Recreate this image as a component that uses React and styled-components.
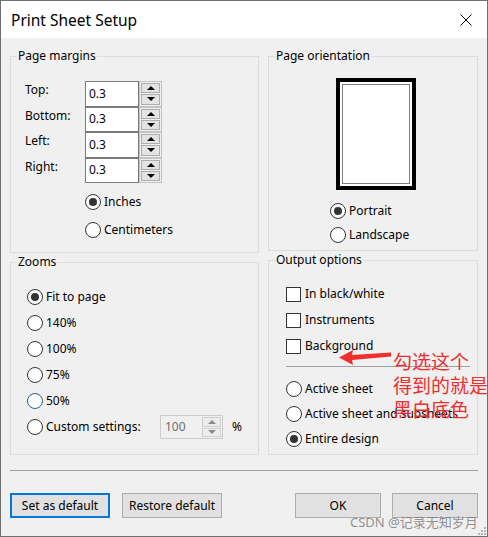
import React from "react";
import styled, { createGlobalStyle } from "styled-components";

const GlobalStyle = createGlobalStyle`
  html, body { margin: 0; padding: 0; background: #fff; }
  body {
    font-family: "Noto Sans", "Noto Sans CJK SC", sans-serif;
    font-size: 12px;
    color: #000;
  }
  * { box-sizing: border-box; }
`;

const Window = styled.div`
  position: relative;
  width: 488px;
  height: 537px;
  border: 1px solid #6f6f6f;
  background: #f0f0f0;
  display: flex;
  flex-direction: column;
  overflow: hidden;
`;

const TitleBar = styled.div`
  height: 37px;
  flex: none;
  background: #fff;
  display: flex;
  align-items: center;
  justify-content: space-between;
  padding: 0 15px 0 10px;
`;

const Title = styled.div`
  font-size: 15.5px;
  line-height: 20px;
`;

const Body = styled.div`
  flex: 1;
  padding: 10px 9px 0 9px;
  display: flex;
  flex-direction: column;
`;

const Columns = styled.div`
  display: flex;
  gap: 9px;
`;

const Column = styled.div`
  display: flex;
  flex-direction: column;
  width: ${(p) => p.$width}px;
`;

const Group = styled.fieldset`
  margin: ${(p) => p.$mt || 0}px 0 0 0;
  padding: 0;
  min-width: 0;
  height: ${(p) => p.$height}px;
  border: 1px solid #dcdcdc;
`;

const Legend = styled.legend`
  margin-left: 6px;
  padding: 0 1px;
  font-size: 12px;
  line-height: 16px;
`;

const GroupInner = styled.div`
  padding: ${(p) => p.$pad};
  display: flex;
  flex-direction: column;
`;

const MarginRow = styled.div`
  display: flex;
  height: 25.5px;
`;

const FieldLabel = styled.div`
  width: 60px;
  line-height: 16px;
  padding-top: 1px;
`;

const TextBox = styled.div`
  width: 54px;
  height: 100%;
  border: 1px solid #7a7a7a;
  background: #fff;
  padding-left: 3px;
  display: flex;
  align-items: center;
  line-height: 16px;
`;

const SpinBox = styled.div`
  width: ${(p) => (p.$disabled ? 21 : 23)}px;
  height: 100%;
  border: ${(p) => (p.$disabled ? "none" : "1px solid #c3c3c3")};
  padding: 1px;
  display: flex;
  flex-direction: column;
  gap: 1px;
  background: #f0f0f0;
`;

const SpinButton = styled.div`
  flex: 1;
  border: 1px solid ${(p) => (p.$disabled ? "#cfcfcf" : "#adadad")};
  background: ${(p) => (p.$disabled ? "#ececec" : "#e3e3e3")};
  display: flex;
  align-items: center;
  justify-content: center;
`;

const Arrow = styled.div`
  width: 0;
  height: 0;
  border-left: 4px solid transparent;
  border-right: 4px solid transparent;
  ${(p) =>
    p.$down
      ? `border-top: 4px solid ${p.$disabled ? "#8a8a8a" : "#000"};`
      : `border-bottom: 4px solid ${p.$disabled ? "#8a8a8a" : "#000"};`}
`;

const Spinner = ({ disabled }) => (
  <SpinBox $disabled={disabled}>
    <SpinButton $disabled={disabled}>
      <Arrow $disabled={disabled} />
    </SpinButton>
    <SpinButton $disabled={disabled}>
      <Arrow $down $disabled={disabled} />
    </SpinButton>
  </SpinBox>
);

const OptionList = styled.div`
  display: flex;
  flex-direction: column;
  gap: ${(p) => p.$gap || 0}px;
  margin: ${(p) => p.$margin || "0"};
`;

const OptionRow = styled.div`
  display: flex;
  align-items: center;
  height: ${(p) => p.$h}px;
  line-height: 16px;
`;

const RadioCircle = styled.span`
  width: 16px;
  height: 16px;
  flex: none;
  border-radius: 50%;
  border: 1px solid ${(p) => (p.$hover ? "#2c5d8f" : "#333")};
  background: #fff;
  display: flex;
  align-items: center;
  justify-content: center;
  margin-right: 3px;
  &::after {
    content: "";
    width: 8px;
    height: 8px;
    border-radius: 50%;
    background: ${(p) => (p.$checked ? "#333" : "transparent")};
  }
`;

const CheckBox = styled.span`
  width: 15px;
  height: 15px;
  flex: none;
  border: 1px solid #333;
  background: #fff;
  margin-right: 4px;
`;

const OptionText = styled.span`
  ${(p) => (p.$w ? `width: ${p.$w}px;` : "")}
  white-space: nowrap;
`;

const Radio = ({ checked, hover, label, h = 16, labelWidth }) => (
  <OptionRow $h={h}>
    <RadioCircle $checked={checked} $hover={hover} />
    <OptionText $w={labelWidth}>{label}</OptionText>
  </OptionRow>
);

const CustomBox = styled.div`
  width: 63px;
  height: 24px;
  border: 1px solid #cccccc;
  background: #f0f0f0;
  display: flex;
  align-items: stretch;
  justify-content: space-between;
`;

const CustomValue = styled.span`
  color: #6d6d6d;
  padding-left: 4px;
  display: flex;
  align-items: center;
`;

const Percent = styled.span`
  margin-left: 9px;
`;

const PageFrame = styled.div`
  width: 80px;
  height: 112px;
  border: 4px solid #000;
  background: #fff;
  padding: 2px;
  margin: ${(p) => p.$margin};
`;

const PageInner = styled.div`
  width: 100%;
  height: 100%;
  border: 1px solid #808080;
`;

const Rule = styled.div`
  height: 1px;
  background: #a0a0a0;
  margin-top: ${(p) => p.$mt}px;
`;

const ButtonRow = styled.div`
  margin-top: 22px;
  display: flex;
  justify-content: space-between;
`;

const ButtonGroup = styled.div`
  display: flex;
  gap: ${(p) => p.$gap}px;
`;

const Button = styled.button`
  width: ${(p) => p.$w}px;
  height: 25px;
  font-family: inherit;
  font-size: 12px;
  line-height: 16px;
  padding: 1px 0 0 0;
  color: #000;
  background: #e1e1e1;
  border: ${(p) => (p.$primary ? "2px solid #0078d7" : "1px solid #adadad")};
  margin: 0;
`;

const Annotation = styled.div`
  position: absolute;
  left: 392px;
  top: 348px;
  font-family: "Noto Sans CJK SC", sans-serif;
  font-size: 19px;
  line-height: 24px;
  color: #f02e2e;
  white-space: nowrap;
`;

const ArrowSvg = styled.svg`
  position: absolute;
  left: 336px;
  top: 344px;
`;

const Watermark = styled.div`
  position: absolute;
  left: 349px;
  top: 513px;
  font-family: "Noto Sans", "Noto Sans CJK SC", sans-serif;
  font-size: 13px;
  line-height: 16px;
  color: rgba(125, 125, 125, 0.85);
  white-space: nowrap;
`;

const Grip = styled.svg`
  position: absolute;
  right: 0;
  bottom: 0;
`;

const margins = ["Top:", "Bottom:", "Left:", "Right:"];
const zooms = ["140%", "100%", "75%"];

export default function App() {
  return (
    <>
      <GlobalStyle />
      <Window>
        <TitleBar>
          <Title>Print Sheet Setup</Title>
          <svg width="12" height="12" viewBox="0 0 12 12">
            <path d="M0.5 0.5 L11.5 11.5 M11.5 0.5 L0.5 11.5" stroke="#000" strokeWidth="1" />
          </svg>
        </TitleBar>
        <Body>
          <Columns>
            <Column $width={249}>
              <Group $height={205}>
                <Legend>Page margins</Legend>
                <GroupInner $pad="17px 0 0 14px">
                  {margins.map((m) => (
                    <MarginRow key={m}>
                      <FieldLabel>{m}</FieldLabel>
                      <TextBox>0.3</TextBox>
                      <Spinner />
                    </MarginRow>
                  ))}
                  <OptionList $gap={12} $margin="11px 0 0 60px">
                    <Radio checked label="Inches" />
                    <Radio label="Centimeters" />
                  </OptionList>
                </GroupInner>
              </Group>
              <Group $height={201} $mt={1}>
                <Legend>Zooms</Legend>
                <GroupInner $pad="14px 0 0 16px">
                  <Radio h={26} checked label="Fit to page" />
                  {zooms.map((z) => (
                    <Radio key={z} h={26} label={z} />
                  ))}
                  <Radio h={26} hover label="50%" />
                  <OptionRow $h={26}>
                    <RadioCircle />
                    <OptionText $w={114}>Custom settings:</OptionText>
                    <CustomBox>
                      <CustomValue>100</CustomValue>
                      <Spinner disabled />
                    </CustomBox>
                    <Percent>%</Percent>
                  </OptionRow>
                </GroupInner>
              </Group>
            </Column>
            <Column $width={210}>
              <Group $height={203}>
                <Legend>Page orientation</Legend>
                <GroupInner $pad="14px 0 0 0">
                  <PageFrame $margin="0 0 0 67px">
                    <PageInner />
                  </PageFrame>
                  <OptionList $margin="9px 0 0 61px">
                    <Radio h={24} checked label="Portrait" />
                    <Radio h={24} label="Landscape" />
                  </OptionList>
                </GroupInner>
              </Group>
              <Group $height={203} $mt={1}>
                <Legend>Output options</Legend>
                <GroupInner $pad="13px 7px 0 17px">
                  {["In black/white", "Instruments", "Background"].map((c) => (
                    <OptionRow key={c} $h={26}>
                      <CheckBox />
                      <OptionText>{c}</OptionText>
                    </OptionRow>
                  ))}
                  <Rule $mt={7} />
                  <OptionList $margin="9px 0 0 0">
                    <Radio h={25} label="Active sheet" />
                    <Radio h={25} label="Active sheet and subsheets" />
                    <Radio h={25} checked label="Entire design" />
                  </OptionList>
                </GroupInner>
              </Group>
            </Column>
          </Columns>
          <Rule $mt={15} />
          <ButtonRow>
            <ButtonGroup $gap={12}>
              <Button $w={100} $primary>Set as default</Button>
              <Button $w={100}>Restore default</Button>
            </ButtonGroup>
            <ButtonGroup $gap={11}>
              <Button $w={86}>OK</Button>
              <Button $w={86}>Cancel</Button>
            </ButtonGroup>
          </ButtonRow>
        </Body>
        <ArrowSvg width="56" height="24" viewBox="0 0 56 24">
          <polygon points="2,12.5 16,5 15,10 54,7.5 54,11.5 15,15 16,20" fill="#f02e2e" />
        </ArrowSvg>
        <Annotation>
          勾选这个
          <br />
          得到的就是
          <br />
          黑白底色
        </Annotation>
        <Watermark>CSDN @记录无知岁月</Watermark>
        <Grip width="10" height="10" viewBox="0 0 10 10">
          <g fill="#b5b5b5">
            <rect x="7" y="1" width="2" height="2" />
            <rect x="4" y="4" width="2" height="2" />
            <rect x="7" y="4" width="2" height="2" />
            <rect x="1" y="7" width="2" height="2" />
            <rect x="4" y="7" width="2" height="2" />
            <rect x="7" y="7" width="2" height="2" />
          </g>
        </Grip>
      </Window>
    </>
  );
}
